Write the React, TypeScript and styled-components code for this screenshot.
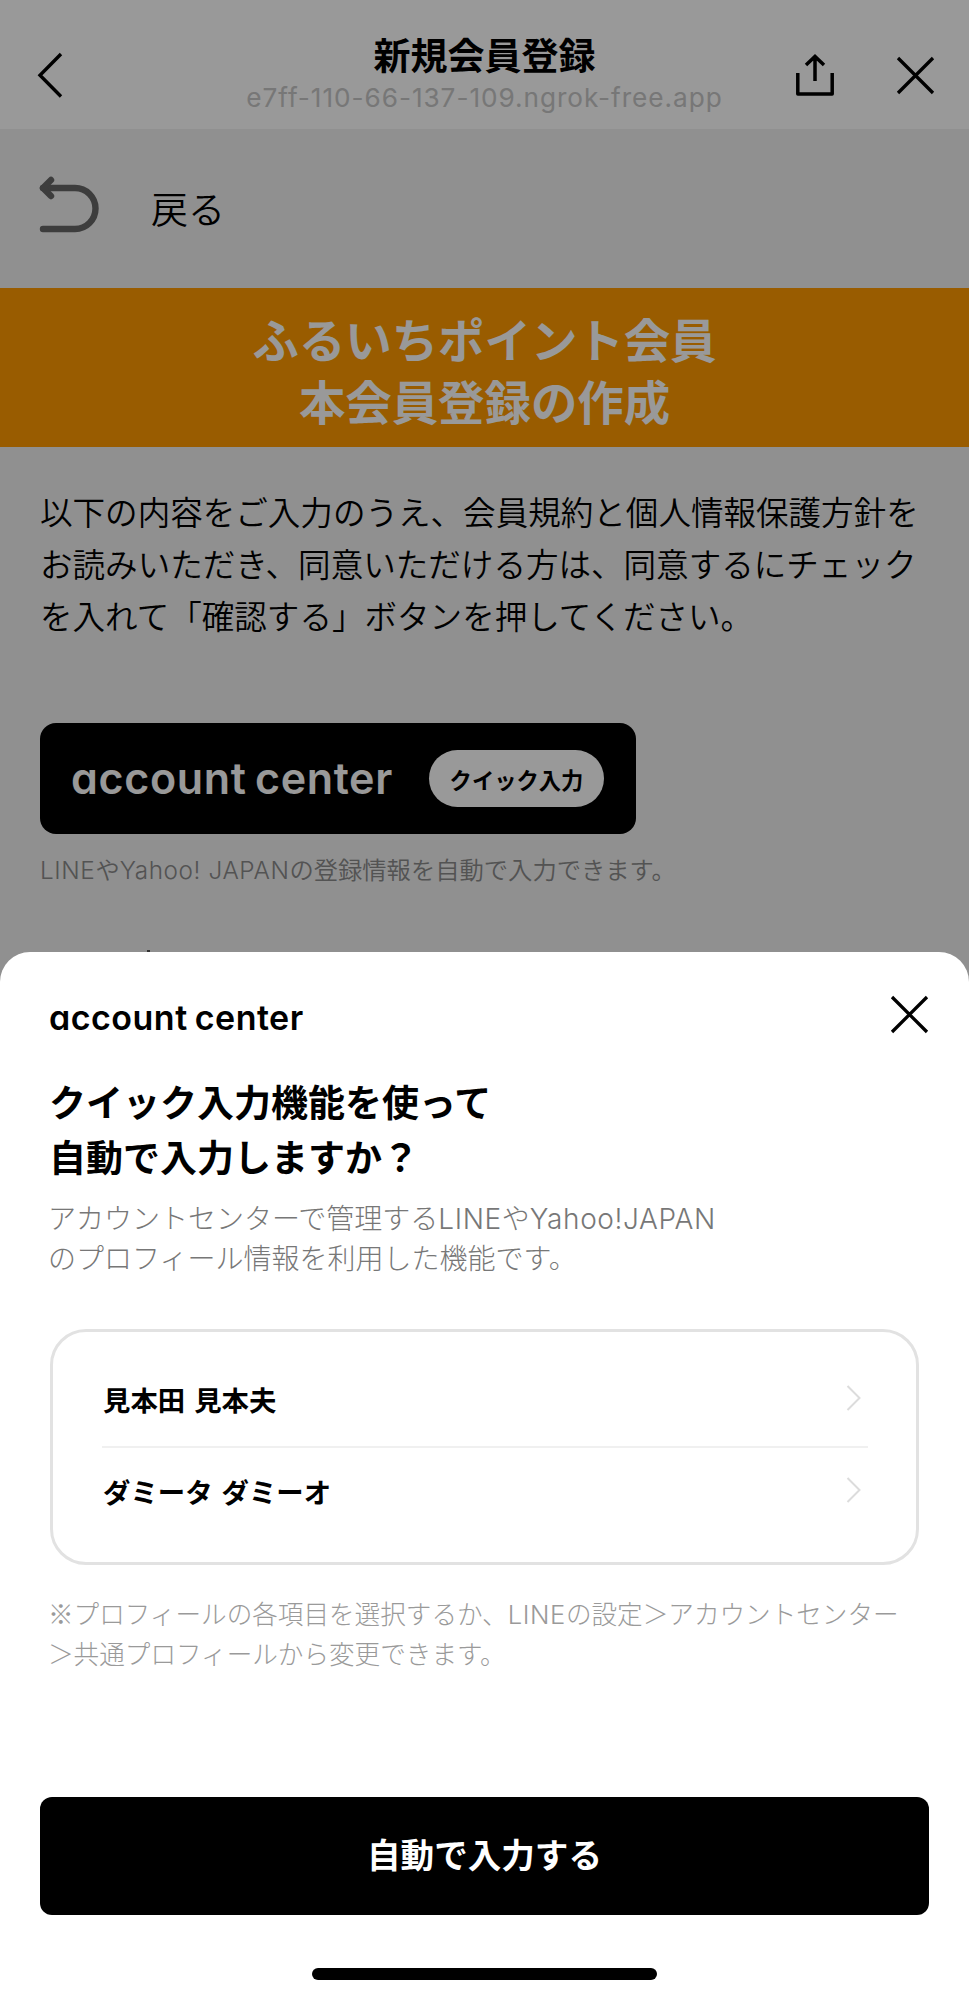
import React from "react";
import styled, { createGlobalStyle } from "styled-components";

const GlobalStyle = createGlobalStyle`
  *, *::before, *::after { box-sizing: border-box; }
  body {
    margin: 0;
    background: #fff;
    font-family: Inter, "Noto Sans CJK JP", sans-serif;
    color: #000;
  }
  h1, h2, p { margin: 0; font-weight: 400; }
  button { font: inherit; color: inherit; border: 0; padding: 0; background: none; }
  svg { display: block; flex: none; }
`;

const Screen = styled.div`
  position: relative;
  width: 969px;
  height: 2000px;
  overflow: hidden;
  background: #f0f0f0;
`;

const Header = styled.header`
  display: grid;
  grid-template-columns: 200px 1fr 200px;
  height: 129px;
  background: #fff;
`;

const HeaderLeft = styled.div`
  padding: 52px 0 0 36px;
`;

const HeaderTitles = styled.div`
  display: flex;
  flex-direction: column;
  align-items: center;
  padding-top: 31px;
  white-space: nowrap;
`;

const PageTitle = styled.h1`
  font-size: 37px;
  line-height: 51px;
  font-weight: 700;
`;

const PageUrl = styled.p`
  font-size: 26.2px;
  line-height: 32px;
  letter-spacing: 0.95px;
  color: #c6c6c6;
`;

const HeaderActions = styled.div`
  display: flex;
  justify-content: space-between;
  padding: 54px 34px 0 26px;
`;

const HeaderClose = styled.div`
  padding-top: 2px;
`;

const BackBar = styled.div`
  display: flex;
  align-items: flex-start;
  gap: 51px;
  height: 159px;
  padding: 47px 0 0 38px;
`;

const BackLabel = styled.span`
  padding-top: 9px;
  font-size: 37px;
  line-height: 52px;
  font-weight: 350;
`;

const Banner = styled.h2`
  height: 159px;
  padding-top: 22px;
  background: #ff9900;
  color: #fff;
  font-size: 46.4px;
  line-height: 62px;
  font-weight: 700;
  text-align: center;
`;

const Intro = styled.p`
  padding: 40px 0 0 40px;
  font-size: 32.55px;
  line-height: 52px;
  font-weight: 350;
  white-space: nowrap;
`;

const QuickCard = styled.div`
  display: flex;
  align-items: center;
  justify-content: space-between;
  width: 596px;
  height: 111px;
  margin: 80px 0 0 40px;
  padding: 0 32px 0 31px;
  border-radius: 16px;
  background: #000;
  color: #fff;
`;

const Wordmark = styled.span`
  font-size: 43px;
  line-height: 1.2;
  letter-spacing: 0.65px;
  word-spacing: -3px;
  font-weight: 600;
  font-feature-settings: "cv11";
  white-space: nowrap;
`;

const SheetWordmark = styled(Wordmark)`
  margin: 3px 0 0 1px;
  font-size: 34px;
  letter-spacing: 0.5px;
  word-spacing: -2px;
`;

const QuickPill = styled.button`
  width: 175px;
  height: 57px;
  border-radius: 29px;
  background: #fff;
  color: #000;
  font-size: 22.3px;
  font-weight: 700;
  white-space: nowrap;
`;

const Latin = styled.span`
  font-family: Inter, sans-serif;
  line-height: 1;
  letter-spacing: 0.6px;
`;

const Caption = styled.p`
  padding: 17px 0 0 40px;
  font-size: 24.3px;
  line-height: 38px;
  font-weight: 350;
  color: #8a8a8a;
  white-space: nowrap;
`;

const HiddenLabelTip = styled.div`
  width: 3px;
  height: 2px;
  margin: 61px 0 0 147px;
  background: #555;
`;

const Dim = styled.div`
  position: absolute;
  inset: 0;
  background: rgba(0, 0, 0, 0.4);
`;

const Sheet = styled.section`
  position: absolute;
  left: 0;
  right: 0;
  bottom: 0;
  display: flex;
  flex-direction: column;
  height: 1048px;
  border-radius: 30px 30px 0 0;
  background: #fff;
`;

const SheetTop = styled.div`
  display: flex;
  justify-content: space-between;
  align-items: flex-start;
  height: 125px;
  padding: 43px 40px 0 48px;
`;

const SheetTitle = styled.h2`
  padding-left: 49px;
  font-size: 37px;
  line-height: 54.5px;
  font-weight: 700;
  white-space: nowrap;
`;

const SheetText = styled.p`
  padding: 13px 0 0 48px;
  font-size: 28px;
  line-height: 40px;
  font-weight: 300;
  color: #777;
  white-space: nowrap;
`;

const ProfileList = styled.div`
  height: 236px;
  margin: 50px 50px 0;
  padding: 23px 48px 0 49px;
  border: 3px solid #e2e2e2;
  border-radius: 36px;
`;

const ProfileRow = styled.button`
  display: flex;
  align-items: center;
  justify-content: space-between;
  width: 100%;
  height: 91px;
  padding: 0 7px 4px 1px;
  font-size: 27.4px;
  font-weight: 700;
  word-spacing: 2.5px;

  & + & {
    border-top: 2px solid #f0f0f0;
  }

  svg {
    margin-bottom: 2px;
  }
`;

const Note = styled.p`
  padding: 28px 0 0 48px;
  font-family: "Noto Sans CJK JP", sans-serif;
  font-size: 25.6px;
  line-height: 39.5px;
  font-weight: 300;
  color: #9a9a9a;
  white-space: nowrap;
`;

const SubmitButton = styled.button`
  height: 118px;
  margin: auto 40px 0;
  padding-bottom: 5px;
  border-radius: 12px;
  background: #000;
  color: #fff;
  font-size: 33.6px;
  font-weight: 700;
`;

const HomeIndicator = styled.div`
  flex: none;
  width: 345px;
  height: 12px;
  margin: 53px auto 20px;
  border-radius: 6px;
  background: #000;
`;

const CloseIcon = () => (
  <svg width="39" height="39" viewBox="0 0 39 39" fill="none" stroke="#000" strokeWidth="3.3">
    <path d="M2 2L37 37M37 2L2 37" />
  </svg>
);

const Chevron = () => (
  <svg width="15" height="26" viewBox="0 0 15 26" fill="none" stroke="#dcdcdc" strokeWidth="2">
    <path d="M1.5 1L13.5 13L1.5 25" />
  </svg>
);

const profiles = ["見本田 見本夫", "ダミータ ダミーオ"];

export default function App() {
  return (
    <>
      <GlobalStyle />
      <Screen>
        <Header>
          <HeaderLeft>
            <svg width="28" height="46" viewBox="0 0 28 46" fill="none" stroke="#000" strokeWidth="3.4">
              <path d="M25 2L4 23.3L25 44.5" />
            </svg>
          </HeaderLeft>
          <HeaderTitles>
            <PageTitle>新規会員登録</PageTitle>
            <PageUrl>e7ff-110-66-137-109.ngrok-free.app</PageUrl>
          </HeaderTitles>
          <HeaderActions>
            <svg width="40" height="44" viewBox="0 0 40 44" fill="none" stroke="#000" strokeWidth="3.5">
              <path d="M2.8 19V40H37.2V19" strokeLinejoin="round" />
              <path d="M20 27V3M11 11L20 2.5L29 11" />
            </svg>
            <HeaderClose>
              <CloseIcon />
            </HeaderClose>
          </HeaderActions>
        </Header>
        <BackBar>
          <svg width="62" height="60" viewBox="0 0 62 60" fill="none" stroke="#666" strokeWidth="6.4" strokeLinecap="round" strokeLinejoin="round">
            <path d="M5 12H37A20.5 20.5 0 0 1 37 53H5" />
            <path d="M13 4L5 12L13 20" />
          </svg>
          <BackLabel>戻る</BackLabel>
        </BackBar>
        <Banner>
          ふるいちポイント会員
          <br />
          本会員登録の作成
        </Banner>
        <Intro>
          以下の内容をご入力のうえ、会員規約と個人情報保護方針を
          <br />
          お読みいただき、同意いただける方は、同意するにチェック
          <br />
          を入れて「確認する」ボタンを押してください。
        </Intro>
        <QuickCard>
          <Wordmark>account center</Wordmark>
          <QuickPill>クイック入力</QuickPill>
        </QuickCard>
        <Caption>
          <Latin>LINE</Latin>や<Latin>Yahoo! JAPAN</Latin>の登録情報を自動で入力できます。
        </Caption>
        <HiddenLabelTip />
        <Dim />
        <Sheet>
          <SheetTop>
            <SheetWordmark>account center</SheetWordmark>
            <CloseIcon />
          </SheetTop>
          <SheetTitle>
            クイック入力機能を使って
            <br />
            自動で入力しますか？
          </SheetTitle>
          <SheetText>
            アカウントセンターで管理する<Latin>LINE</Latin>や<Latin>Yahoo!JAPAN</Latin>
            <br />
            のプロフィール情報を利用した機能です。
          </SheetText>
          <ProfileList>
            {profiles.map((name) => (
              <ProfileRow key={name}>
                {name}
                <Chevron />
              </ProfileRow>
            ))}
          </ProfileList>
          <Note>
            ※プロフィールの各項目を選択するか、<Latin>LINE</Latin>の設定＞アカウントセンター
            <br />
            ＞共通プロフィールから変更できます。
          </Note>
          <SubmitButton>自動で入力する</SubmitButton>
          <HomeIndicator />
        </Sheet>
      </Screen>
    </>
  );
}
